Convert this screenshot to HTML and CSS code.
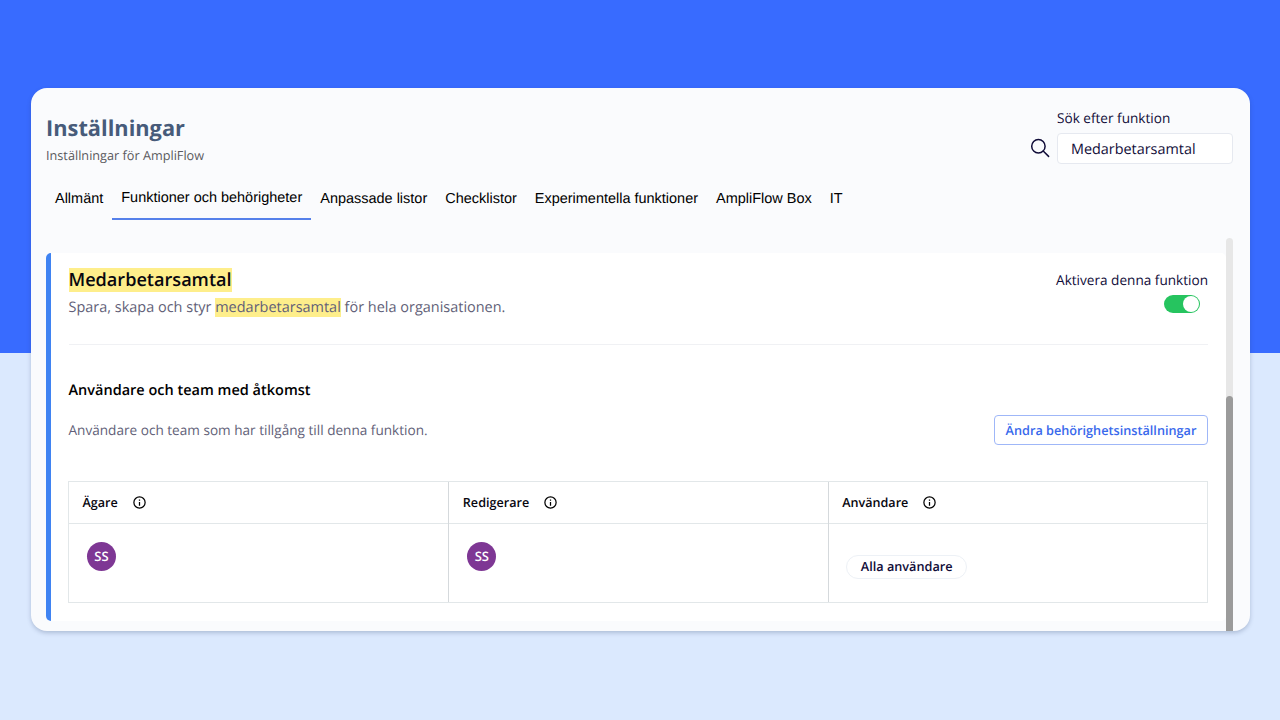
FILE: index.html
```
<!DOCTYPE html>
<html lang="sv">
<head>
  <meta charset="UTF-8">
  <meta name="viewport" content="width=device-width, initial-scale=1.0">
  <title>Inställningar</title>
  <link rel="stylesheet" href="styles.css">
</head>
<body>
  <main class="window">
    <header class="header">
      <div class="heading">
        <h1>Inställningar</h1>
        <p>Inställningar för AmpliFlow</p>
      </div>
      <div class="search">
        <svg class="search-icon" viewBox="0 0 20 20" fill="none" stroke="#100c38" stroke-width="1.5" stroke-linecap="round">
          <circle cx="8.4" cy="8.2" r="6.7"/>
          <path d="M13.2 13L18.6 18.4"/>
        </svg>
        <div class="search-field">
          <label for="search">Sök efter funktion</label>
          <input type="text" id="search" value="Medarbetarsamtal">
        </div>
      </div>
    </header>

    <nav class="tabs">
      <a class="tab">Allmänt</a>
      <a class="tab active">Funktioner och behörigheter</a>
      <a class="tab">Anpassade listor</a>
      <a class="tab">Checklistor</a>
      <a class="tab">Experimentella funktioner</a>
      <a class="tab">AmpliFlow Box</a>
      <a class="tab">IT</a>
    </nav>

    <div class="content">
      <section class="panel">
        <div class="feature">
          <div>
            <h2><mark>Medarbetarsamtal</mark></h2>
            <p>Spara, skapa och styr <mark>medarbetarsamtal</mark> för hela organisationen.</p>
          </div>
          <div class="activate">
            <span>Aktivera denna funktion</span>
            <div class="toggle"></div>
          </div>
        </div>

        <h3>Användare och team med åtkomst</h3>
        <div class="access">
          <p>Användare och team som har tillgång till denna funktion.</p>
          <button>Ändra behörighetsinställningar</button>
        </div>

        <div class="grid">
          <div class="column">
            <div class="column-title">
              Ägare
              <svg class="info" viewBox="0 0 24 24"><path d="M11 7h2v2h-2zm0 4h2v6h-2zm1-9a10 10 0 1 0 0 20 10 10 0 0 0 0-20zm0 18a8 8 0 1 1 0-16 8 8 0 0 1 0 16z"/></svg>
            </div>
            <div class="column-body"><span class="avatar">SS</span></div>
          </div>
          <div class="column">
            <div class="column-title">
              Redigerare
              <svg class="info" viewBox="0 0 24 24"><path d="M11 7h2v2h-2zm0 4h2v6h-2zm1-9a10 10 0 1 0 0 20 10 10 0 0 0 0-20zm0 18a8 8 0 1 1 0-16 8 8 0 0 1 0 16z"/></svg>
            </div>
            <div class="column-body"><span class="avatar">SS</span></div>
          </div>
          <div class="column">
            <div class="column-title">
              Användare
              <svg class="info" viewBox="0 0 24 24"><path d="M11 7h2v2h-2zm0 4h2v6h-2zm1-9a10 10 0 1 0 0 20 10 10 0 0 0 0-20zm0 18a8 8 0 1 1 0-16 8 8 0 0 1 0 16z"/></svg>
            </div>
            <div class="column-body"><span class="chip">Alla användare</span></div>
          </div>
        </div>
      </section>
      <div class="scrollbar"><div class="thumb"></div></div>
    </div>
  </main>
</body>
</html>
```
FILE: styles.css
```
* {
  box-sizing: border-box;
}
body {
  background: linear-gradient(#386bff 353px, #dbe9fe 353px);
  font-family: "Open Sans", sans-serif;
  height: 720px;
  margin: 0;
  overflow: hidden;
  padding: 88px 30px 0 31px;
  text-rendering: geometricPrecision;
}
h1, h2, h3, p {
  margin: 0;
}
.window {
  background-color: #fafbfd;
  border-radius: 16px;
  box-shadow: 0 2px 4px rgba(40, 60, 100, 0.25);
  display: flex;
  flex-direction: column;
  height: 543px;
  overflow: hidden;
  padding: 0 17px 0 15px;
}
.header {
  display: flex;
  height: 88px;
  justify-content: space-between;
}
.heading {
  padding-top: 25px;
}
.heading h1 {
  color: #475b7a;
  font-size: 21.8px;
  line-height: 32px;
}
.heading p {
  color: #5a5a5e;
  font-size: 12.7px;
  line-height: 18px;
  margin-top: 1px;
}
.search {
  display: flex;
  gap: 7px;
  padding-top: 20px;
}
.search-icon {
  height: 20px;
  margin-top: 30px;
  width: 20px;
}
.search-field {
  color: #100c38;
  display: flex;
  flex-direction: column;
  width: 176px;
}
.search-field label {
  font-size: 13.6px;
  line-height: 20px;
  margin-bottom: 5px;
}
.search-field input {
  background-color: white;
  border: 1px solid #e6e9f0;
  border-radius: 4px;
  color: #100c38;
  font-family: inherit;
  font-size: 14.4px;
  height: 31px;
  padding: 1px 13px 0;
  text-rendering: inherit;
  width: 100%;
}
.tabs {
  display: flex;
  font-family: "Liberation Sans", Arial, sans-serif;
  font-size: 14.48px;
  height: 44px;
  line-height: 46px;
}
.tab {
  color: black;
  padding: 0 9px;
  white-space: nowrap;
}
.tab.active {
  border-bottom: 2px solid #5580ea;
  line-height: 44px;
}
.content {
  display: flex;
  flex: 1;
  margin-top: 18px;
}
.panel {
  background-color: white;
  border-left: 5px solid #3f83f2;
  border-radius: 5px;
  flex: 1;
  height: 368px;
  margin-top: 14.5px;
  padding: 0 18px 0 17.5px;
}
.feature {
  border-bottom: 1px solid #f0f1f4;
  display: flex;
  height: 92.5px;
  justify-content: space-between;
  padding-top: 13px;
}
.feature h2 {
  color: #08070f;
  font-size: 18.1px;
  font-weight: 600;
  line-height: 28px;
}
.feature p {
  color: #625f78;
  font-size: 14.47px;
  line-height: 20px;
  margin-top: 4px;
}
mark {
  background-color: #feee8b;
  color: inherit;
}
.activate {
  align-items: flex-end;
  color: #100c38;
  display: flex;
  flex-direction: column;
  font-size: 13.6px;
  line-height: 20px;
  padding-top: 4px;
}
.toggle {
  background-color: #26c45f;
  border-radius: 9px;
  display: flex;
  height: 18px;
  justify-content: flex-end;
  margin: 5px 8.5px 0 0;
  padding: 1px;
  width: 36px;
}
.toggle::after {
  background-color: white;
  border-radius: 50%;
  content: "";
  height: 16px;
  width: 16px;
}
.panel h3 {
  color: black;
  font-size: 14.5px;
  font-weight: 600;
  line-height: 20px;
  margin-top: 36px;
}
.access {
  align-items: center;
  display: flex;
  height: 30px;
  justify-content: space-between;
  margin-top: 14px;
}
.access p {
  color: #625f78;
  font-size: 13.6px;
  line-height: 20px;
}
.access button {
  background-color: white;
  border: 1px solid #9fb7f8;
  border-radius: 4px;
  color: #3969ec;
  font-family: inherit;
  font-size: 12.7px;
  font-weight: 600;
  height: 30px;
  padding: 0;
  text-rendering: inherit;
  width: 214px;
}
.grid {
  border: 1px solid #e2e7e9;
  display: grid;
  grid-template-columns: repeat(3, 1fr);
  height: 122px;
  margin: 36px 0 0 -0.5px;
}
.column + .column {
  border-left: 1px solid #d5d9dc;
}
.column-title {
  align-items: center;
  border-bottom: 1px solid #e2e7e9;
  color: #08070f;
  display: flex;
  font-size: 12.6px;
  font-weight: 600;
  gap: 14px;
  height: 42px;
  padding-left: 13.5px;
}
.info {
  height: 15px;
  width: 15px;
}
.column-body {
  padding: 18px;
}
.avatar {
  align-items: center;
  background-color: #7e3794;
  border-radius: 50%;
  color: white;
  display: flex;
  font-size: 13px;
  font-weight: 600;
  height: 29px;
  justify-content: center;
  line-height: 20px;
  padding-bottom: 1px;
  width: 29px;
}
.chip {
  align-items: center;
  border: 1px solid #edf1f6;
  border-radius: 12px;
  color: #100c38;
  display: flex;
  font-size: 12.7px;
  font-weight: 600;
  height: 24px;
  justify-content: center;
  line-height: 20px;
  margin: 13px 0 0 -0.5px;
  padding-bottom: 2px;
  width: 121px;
}
.scrollbar {
  background-color: #e7e7e7;
  border-radius: 4px 4px 0 0;
  padding-top: 158px;
  width: 7px;
}
.thumb {
  background-color: #9b9b9b;
  border-radius: 4px 4px 0 0;
  height: 100%;
}
```
